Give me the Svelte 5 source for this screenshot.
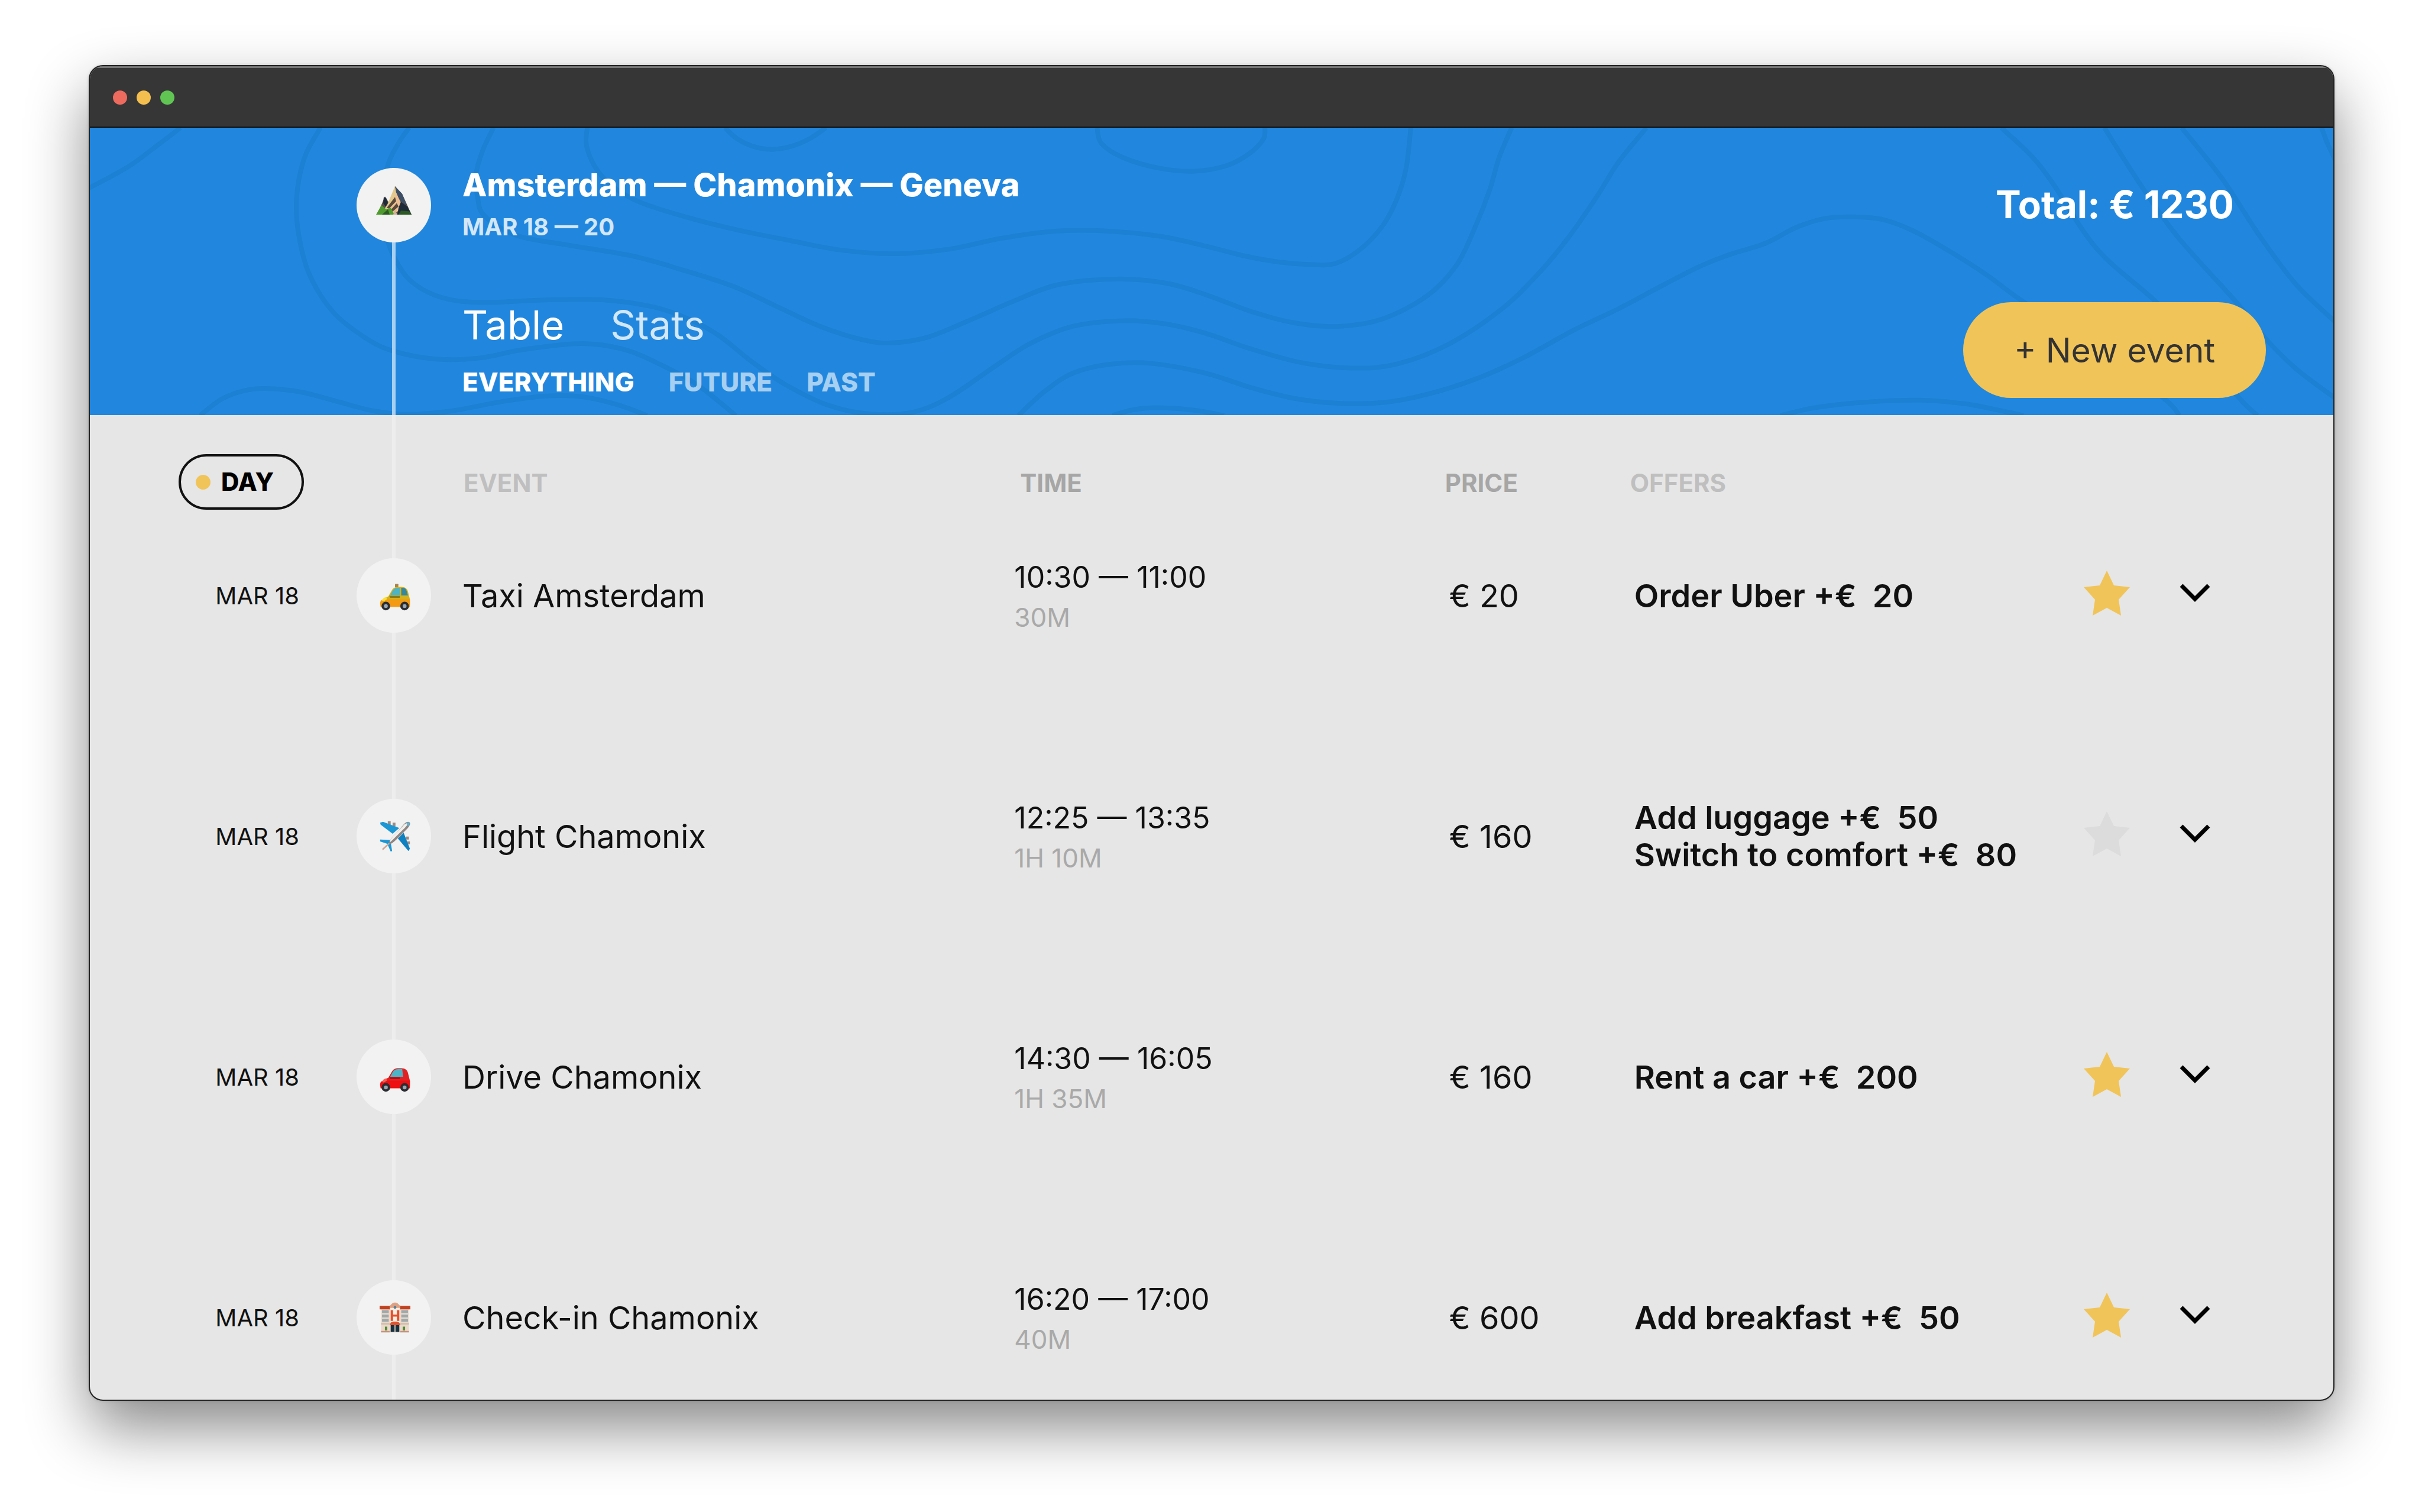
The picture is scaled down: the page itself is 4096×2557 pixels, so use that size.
<script>
  const labels = ['EVENT', 'TIME', 'PRICE', 'OFFERS'];
  const events = [
    { icon: 'taxi', date: 'MAR 18', title: 'Taxi Amsterdam', time: '10:30 — 11:00', span: '30M', price: '€ 20', offers: ['Order Uber +€\u00a0 20'], star: true },
    { icon: 'plane', date: 'MAR 18', title: 'Flight Chamonix', time: '12:25 — 13:35', span: '1H 10M', price: '€ 160', offers: ['Add luggage +€\u00a0 50', 'Switch to comfort +€\u00a0 80'], star: false },
    { icon: 'car', date: 'MAR 18', title: 'Drive Chamonix', time: '14:30 — 16:05', span: '1H 35M', price: '€ 160', offers: ['Rent a car +€\u00a0 200'], star: true },
    { icon: 'hotel', date: 'MAR 18', title: 'Check-in Chamonix', time: '16:20 — 17:00', span: '40M', price: '€ 600', offers: ['Add breakfast +€\u00a0 50'], star: true }
  ];

  // Contour lines of the header map: points in map units, west half and east half.
  const east = (pts) => pts.map(([x, y]) => [1555 + 1.021 * x, y]);
  const contours = [
    [[133,303],[100,380],[60,470],[0,570]],
    [[327,303],[305,430],[294,600],[297,760],[312,930],[345,1090],[390,1200],[430,1257],[490,1290],[550,1284],[610,1248],[690,1223],[750,1250],[800,1315],[850,1400],[903,1530]],
    [[450,303],[435,370],[420,470],[415,640],[420,780],[432,870],[450,950],[480,1010],[515,1040],[560,1048],[640,1037],[720,1037],[790,1068],[840,1122],[880,1190],[925,1300],[970,1395],[1030,1485],[1090,1524],[1150,1515],[1200,1450],[1260,1325],[1310,1225],[1370,1150],[1440,1126],[1500,1140],...east([[0,1180],[60,1245],[130,1305],[200,1328],[260,1310],[330,1225],[400,1080],[450,930],[490,780],[530,600],[560,450],[598,303]])],
    [[567,303],[552,400],[543,500],[545,600],[555,680],[600,763],[670,803],[760,850],[830,910],[900,980],[960,1065],[1020,1150],[1080,1208],[1120,1220],[1170,1195],[1230,1120],[1290,1040],[1350,972],[1430,948],[1500,966],...east([[0,1015],[60,1085],[120,1135],[180,1150],[240,1118],[300,1020],[340,890],[365,730],[385,570],[398,430],[415,303]])],
    [[697,303],[696,380],[710,480],[735,560],[770,620],[830,680],[900,735],[980,785],[1050,825],[1125,840],[1200,820],[1270,775],[1340,745],[1410,742],[1490,765],...east([[0,808],[50,848],[100,876],[140,886],[175,882],[210,820],[240,720],[260,600],[272,470],[278,303]])],
    [[888,303],[905,350],[930,385],[955,395],[980,382],[1005,350],[1028,303]],
    [[1404,303],[1410,370],[1440,430],[1490,475],[1540,488],...east([[30,462],[60,410],[78,350],[80,303]])],
    [[160,1530],[190,1460],[220,1425],[250,1415],[300,1430],[350,1470],[400,1510],[450,1525],[510,1510],[580,1470],[640,1447],[690,1450],[740,1485],[780,1530]],
    [[1295,1530],[1330,1430],[1370,1350],[1420,1312],[1480,1308],...east([[0,1350],[60,1410],[120,1457],[180,1478],[240,1475],[300,1440],[370,1370],[430,1285],[500,1165],[560,1075],[620,975],[670,895],[710,845],[760,795],[800,730],[840,690],[880,683],[920,695],[960,742],[1010,830],[1060,930],[1110,1045],[1210,1250],[1300,1455],[1322,1530]])],
    [[1425,1530],[1455,1505],[1490,1497],[1540,1508],[1580,1530]],
    east([[1080,303],[1120,420],[1150,540],[1210,820],[1290,1045],[1350,1240],[1403,1455],[1428,1530]]),
    east([[1220,303],[1270,550],[1320,770],[1400,1050],[1437,1195],[1480,1330],[1535,1460]]),
    east([[1325,303],[1380,520],[1430,760],[1480,970],[1535,1135]]),
    east([[1515,303],[1523,370],[1535,450]]),
    east([[780,1530],[830,1495],[900,1472],[970,1465],[1030,1480],[1080,1510],[1110,1530]])
  ];

  // Catmull-Rom spline through the points, written as cubic Béziers.
  function smooth(p) {
    let d = `M${p[0]}`;
    for (let i = 0; i < p.length - 1; i++) {
      const a = p[i - 1] ?? p[i], b = p[i], c = p[i + 1], e = p[i + 2] ?? c;
      d += `C${b[0] + (c[0] - a[0]) / 6},${b[1] + (c[1] - a[1]) / 6} ${c[0] - (e[0] - b[0]) / 6},${c[1] - (e[1] - b[1]) / 6} ${c}`;
    }
    return d;
  }
</script>

{#snippet glyph(kind)}
  <svg class="glyph" viewBox="0 0 64 64" aria-hidden="true">
    {#if kind === 'mountain'}
      <g transform="translate(0 -9) scale(1 1.14)">
        <path fill="#5a5148" d="M4 50 17 23l8 11L34 8l12 11 16 31z" />
        <path fill="#e3c88e" d="M34 8 21 35l-6 8 16 7 12-8-5-22z" />
        <path fill="#edbd92" d="M36 18l8 14-7 14-12 4-6-6 13-9z" />
        <path fill="#3d4f66" d="M34 8l12 11 8 17-10-5-8-14z" />
        <path fill="#1f2a38" d="M15 24l4 1 3 8-4 5-4-5zM44 31l11 7 7 12H38l2-10z" />
        <path fill="#5b4a3b" d="M34 24 20 40l4 1 12-11zM37 33 25 45l3 2 12-9z" />
        <path fill="#4f9a2e" d="M2 50 11 36l8 6 8-2 6 10z" />
        <path fill="#2c5a22" d="M12 50l10-8 3 8zM40 50l4-6 14 1 4 5z" />
        <path fill="#cdb195" d="M31 50l3-7 4 7z" />
      </g>
    {:else if kind === 'taxi' || kind === 'car'}
      <g transform="translate(0 7)">
        {#if kind === 'taxi'}
          <rect x="32" y="1" width="7" height="7" rx="1" fill="#a9834f" />
        {/if}
        <path fill={kind === 'taxi' ? '#d3b21c' : '#e02222'} d="M4 45c0-9 5-15 14-18l7-12c3-6 8-8 14-8h6c8 0 13 4 14 10l4 16v12H4z" />
        <path fill={kind === 'taxi' ? '#f39a12' : '#ee0f12'} d="M1 42c0-6 3-9 9-9h53v16H2z" />
        <path fill="#4db3c6" d="M22 25l6-11c2-3 6-5 11-5h3v16z" />
        <path fill={kind === 'taxi' ? '#3487a0' : '#4db3c6'} d={kind === 'taxi' ? 'M45 9c8 0 10 2 11 6l3 10H45z' : 'M41 9h6l2 16h-8z'} />
        <path fill={kind === 'taxi' ? '#8c7a14' : '#b80a12'} d="M20 26h22v4H22z" />
        <path fill={kind === 'taxi' ? '#fbe02e' : '#ff5a50'} d="M5 36c1-4 4-7 9-8l1 5-6 4z" />
        <g fill="#2b2d31"><circle cx="13" cy="47" r="9" /><circle cx="52" cy="47" r="9" /></g>
        <g fill="#9aa6b2"><circle cx="13" cy="47" r="4" /><circle cx="52" cy="47" r="4" /></g>
      </g>
    {:else if kind === 'plane'}
      <path fill="#9b8b85" d="M17 1h6v8h-6zM27 4h6v8h-6zM55 33h6v6h-6zM57 43h6v6h-6z" />
      <path fill="#1c97d4" d="M1 4l6-2 34 13-14 12L2 8z" />
      <path fill="#0f81c0" d="M50 25l13 33-3 5-22-26z" />
      <path fill="#1c97d4" d="M1 39l20 1 2 4 3 19-3 1-7-16-15-5z" />
      <path fill="#8f8784" d="M20 49c-1-6 4-13 14-23L49 9c5-6 10-8 13-6s1 8-4 13L41 33C31 43 25 49 20 49z" />
      <path fill="#f1eeec" d="M21 45c0-5 5-11 13-19L49 10c4-4 8-6 10-4-3 6-9 11-15 17L30 37c-5 5-8 8-9 8z" />
      <path stroke="#c9a898" stroke-width="3" d="M6 60l14-13" />
      <path fill="#53b6e0" d="M57 4c3-2 6 0 5 4l-2 3-4-4z" />
    {:else}
      <path fill="#ead9cb" d="M3 12h58v51H3z" />
      <path fill="#c2421f" d="M0 8h64v7H0z" />
      <path fill="#dda083" d="M21 15V8c3-2 5-7 11-7s8 5 11 7v7z" />
      <path fill="#f5ece2" d="M22 12h20v31H22z" />
      <circle cx="32" cy="11" r="3" fill="#5b7f96" />
      <path fill="#9fa8aa" d="M5 17h14v6H5zM5 26h14v6H5zM5 35h14v6H5zM45 17h14v6H45zM45 26h14v6H45zM45 35h14v6H45z" />
      <path fill="#e2502c" d="M23 17h5v9h8v-9h5v22h-5v-9h-8v9h-5zM23 43c3-3 15-3 18 0l2 5H21z" />
      <path fill="#d3bfae" d="M3 43h18v4H3zM43 43h18v4H43z" />
      <path fill="#17303f" d="M23 48h8v14h-8zM33 48h8v14h-8z" />
      <path fill="#4e8c36" d="M11 51h5v8h-5zM48 51h5v8h-5z" />
      <path fill="#c9907c" d="M3 60h18v3H3zM43 60h18v3H43z" />
    {/if}
  </svg>
{/snippet}

<div class="desktop">
  <main class="window">
    <div class="titlebar">
      <span class="light red"></span><span class="light amber"></span><span class="light green"></span>
    </div>

    <header class="hero">
      <svg class="map" viewBox="0 0 3795 486" preserveAspectRatio="none" aria-hidden="true">
        <g transform="translate(-9 -120) scale(1.22 0.3965)">
          {#each contours as line}
            <path d={smooth(line)} />
          {/each}
        </g>
      </svg>
      <div class="rail">
        <span class="badge">{@render glyph('mountain')}</span>
      </div>
      <div class="trip">
        <h1>Amsterdam — Chamonix — Geneva</h1>
        <p class="dates">MAR 18 — 20</p>
        <nav class="views">
          <a href="#table" class="current">Table</a>
          <a href="#stats">Stats</a>
        </nav>
        <nav class="filters">
          <a href="#everything" class="current">EVERYTHING</a>
          <a href="#future">FUTURE</a>
          <a href="#past">PAST</a>
        </nav>
      </div>
      <div class="summary">
        <p class="total">Total: € 1230</p>
        <button class="new" type="button">+ New event</button>
      </div>
    </header>

    <div class="body">
      <table>
        <colgroup>
          <col class="c-date" /><col class="c-rail" /><col class="c-event" /><col class="c-time" /><col class="c-price" /><col /><col class="c-star" /><col class="c-more" />
        </colgroup>
        <thead>
          <tr>
            <th class="daycell"><button class="day" type="button"><span class="dot"></span>DAY</button></th>
            <td class="line"></td>
            {#each labels as label}
              <th class={label.toLowerCase()}>{label}</th>
            {/each}
            <td></td>
            <td></td>
          </tr>
        </thead>
        <tbody>
          {#each events as ev}
            <tr>
              <td class="date"><div class="cell">{ev.date}</div></td>
              <td class="line"><span class="badge">{@render glyph(ev.icon)}</span></td>
              <td><div class="cell">{ev.title}</div></td>
              <td><div class="cell hours"><span class="range">{ev.time}</span><span class="span">{ev.span}</span></div></td>
              <td class="inset"><div class="cell">{ev.price}</div></td>
              <td class="inset"><div class="cell offer">{#each ev.offers as offer}<span>{offer}</span>{/each}</div></td>
              <td>
                <button class="icon" class:on={ev.star} type="button" aria-label="Favourite" aria-pressed={ev.star}>
                  <svg class="star" viewBox="0 0 78 76" aria-hidden="true"><path d="M39 0 51 25 78 28 59 49 63 76 39 63 15 76 19 49 0 28 27 25z" /></svg>
                </button>
              </td>
              <td>
                <button class="icon" type="button" aria-label="Show details">
                  <svg class="chevron" viewBox="0 0 52 32" aria-hidden="true"><path d="M3 3 26 26 49 3" /></svg>
                </button>
              </td>
            </tr>
          {/each}
        </tbody>
      </table>
    </div>
  </main>
</div>

<style>
  :global(body) { background: #fff; }
  .desktop {
    box-sizing: border-box;
    height: 100vh;
    padding: 112px 150px 190px 152px;
    display: flex;
    font-family: Inter, "Liberation Sans", sans-serif;
    font-size: 54px;
    color: #111;
  }
  .window {
    flex: 1;
    min-width: 0;
    display: flex;
    flex-direction: column;
    overflow: hidden;
    border-radius: 22px;
    background: #e6e6e6;
    box-shadow: 0 0 0 2px #222, 0 0 6px rgba(0, 0, 0, 0.3), 0 46px 104px rgba(0, 0, 0, 0.48);
  }
  .titlebar {
    box-sizing: border-box;
    flex: none;
    height: 104px;
    padding-left: 39px;
    display: flex;
    align-items: center;
    gap: 16px;
    background: #363636;
    border-top: 3px solid #777;
    border-bottom: 2px solid #111;
  }
  .light { width: 24px; height: 24px; border-radius: 50%; }
  .red { background: #ed6a5e; }
  .amber { background: #f5bf4f; }
  .green { background: #61c554; }

  .hero {
    position: relative;
    flex: none;
    display: flex;
    height: 486px;
    background: #2187de;
    color: #fff;
  }
  .map { position: absolute; inset: 0; width: 100%; height: 100%; }
  .map path { fill: none; stroke: #1c80d3; stroke-width: 8px; vector-effect: non-scaling-stroke; }
  .rail, .trip, .summary { position: relative; }
  .rail {
    width: 126px;
    margin: 68px 53px 0 451px;
    background: linear-gradient(#a6cff2, #a6cff2) 60px 0 / 6px 100% no-repeat;
  }
  .badge {
    display: grid;
    place-items: center;
    width: 126px;
    height: 126px;
    border-radius: 50%;
    background: #f2f2f2;
  }
  .glyph { width: 52px; height: 52px; }
  .rail .glyph { width: 64px; height: 64px; }
  .trip { flex: 1; padding-top: 62px; }
  h1, p { margin: 0; }
  h1 { font-size: 54px; line-height: 70px; font-weight: 800; }
  .dates { font-size: 40px; line-height: 72px; font-weight: 700; opacity: 0.8; }
  a { color: inherit; text-decoration: none; opacity: 0.8; }
  .filters a { opacity: 0.6; }
  a.current { opacity: 1; }
  .views { display: flex; gap: 78px; margin-top: 82px; font-size: 67px; line-height: 96px; }
  .filters { display: flex; gap: 58px; font-size: 44px; line-height: 96px; font-weight: 800; }
  .summary { display: flex; flex-direction: column; align-items: flex-end; padding: 90px 114px 0 0; }
  .total { margin-right: 54px; font-size: 64px; line-height: 80px; font-weight: 700; }
  button { font: inherit; color: inherit; border: 0; padding: 0; background: none; cursor: pointer; }
  .new {
    width: 512px;
    height: 162px;
    margin-top: 125px;
    border-radius: 81px;
    background: #f1c459;
    color: #333;
    font-size: 57px;
  }

  .body { flex: 1; min-height: 0; overflow: hidden; }
  table { width: 100%; table-layout: fixed; border-collapse: collapse; }
  th, td { padding: 0; text-align: left; vertical-align: top; white-space: nowrap; }
  .c-date { width: 354px; }
  .c-rail { width: 276px; }
  .c-event { width: 24.6%; }
  .c-time { width: 19.2%; }
  .c-price { width: 8.25%; }
  .c-star { width: 162px; }
  .c-more { width: 260px; }
  thead tr { height: 182px; }
  tbody tr { height: 407px; }
  th { font-size: 42px; line-height: 94px; font-weight: 700; color: #a6a6a6; padding-top: 68px; }
  .event, .offers { color: #bfbfbf; }
  .event { padding-left: 2px; }
  .time { padding-left: 10px; }
  .daycell { padding: 66px 0 0 150px; }
  .day {
    box-sizing: border-box;
    display: flex;
    align-items: center;
    gap: 18px;
    height: 94px;
    width: 212px;
    padding-left: 25px;
    border: 4px solid #111;
    border-radius: 47px;
    color: #000;
    font-weight: 800;
  }
  .dot { width: 25px; height: 25px; border-radius: 50%; background: #f1c459; }
  .line { background: linear-gradient(#ededed, #ededed) 157px 0 / 6px 100% no-repeat; }
  tbody td { padding-top: 60px; }
  tbody .line { padding-left: 97px; }
  tbody .glyph { margin-left: 3px; }
  .cell { display: flex; flex-direction: column; justify-content: center; height: 126px; }
  .date { font-size: 40px; text-align: right; }
  .hours { padding-top: 3px; line-height: 68px; }
  .range { font-size: 50px; }
  .span { font-size: 44px; color: #a9a9a9; }
  tbody .inset { padding-left: 7px; }
  .offer { font-weight: 600; line-height: 63px; }
  .icon { display: flex; align-items: center; height: 118px; color: #dcdcdc; }
  .icon.on { color: #f1c459; }
  .star { width: 78px; height: 76px; fill: currentColor; }
  .chevron { width: 52px; height: 32px; fill: none; stroke: #000; stroke-width: 7px; }
</style>
